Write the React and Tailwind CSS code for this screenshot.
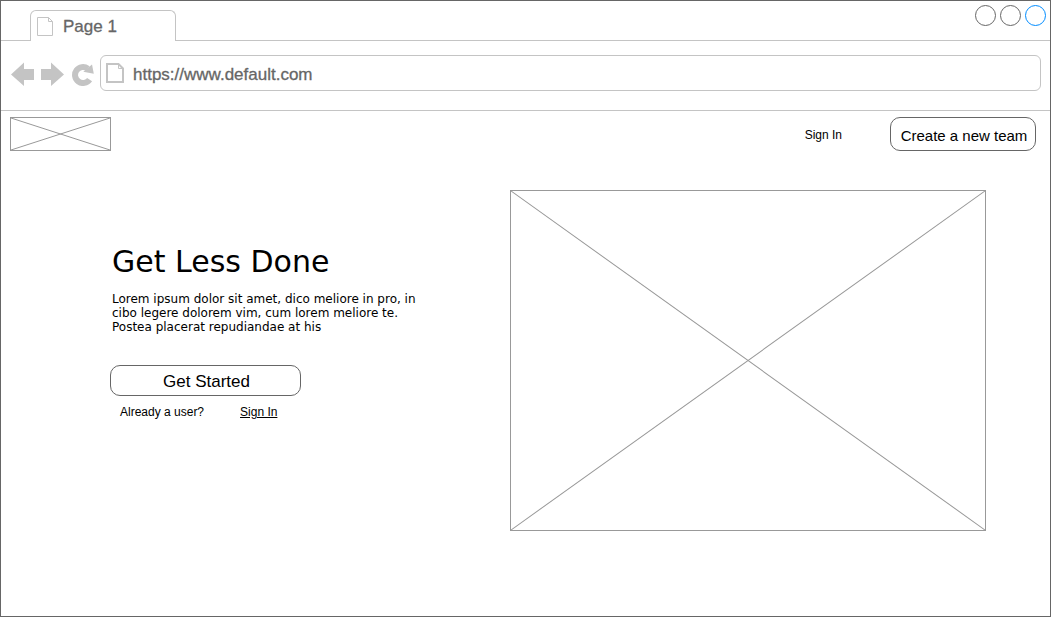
function PageIcon({ className, strokeWidth }) {
  return (
    <svg viewBox="0 0 18 20" className={className} fill="none" stroke="#c4c4c4" strokeWidth={strokeWidth} aria-hidden="true">
      <path d="M1 1H12.5L17 5.5V19H1Z" />
      <path d="M12.5 1V5.5H17" strokeWidth="1" />
    </svg>
  );
}

function ImagePlaceholder({ className, label }) {
  return (
    <div className={`border border-[#999999] ${className}`} role="img" aria-label={label}>
      <svg className="block h-full w-full" viewBox="0 0 100 100" preserveAspectRatio="none" stroke="#999999" aria-hidden="true">
        <path d="M0 0L100 100M0 100L100 0" vectorEffect="non-scaling-stroke" />
      </svg>
    </div>
  );
}

function TabBar() {
  return (
    <div className="flex h-10">
      <div className="w-[29px] border-b border-[#c4c4c4]" />
      <div className="mt-[9px] flex w-[146px] items-center rounded-t-md border border-b-0 border-[#c4c4c4] pl-1.5 pt-0.5 text-[17px] leading-5 text-[#666666]">
        <svg viewBox="0 0 17 20" className="h-5 w-[17px]" fill="none" stroke="#c4c4c4" aria-hidden="true">
          <path d="M0.5 0.5H11.5L15.5 4.5V18.5H0.5ZM11.5 0.5V4.5H15.5" />
        </svg>
        <span className="pl-[9px] [-webkit-text-stroke:0.3px_#666666]">Page 1</span>
      </div>
      <div className="flex flex-1 justify-end gap-1 border-b border-[#c4c4c4] pr-1 pt-1">
        <button aria-label="Minimize" className="size-[21px] rounded-full border border-[#666666]" />
        <button aria-label="Maximize" className="size-[21px] rounded-full border border-[#666666]" />
        <button aria-label="Close" className="size-[21px] rounded-full border border-[#008cff]" />
      </div>
    </div>
  );
}

function Toolbar() {
  return (
    <div className="flex h-[70px] items-start border-b border-[#c4c4c4] pl-2.5 pr-[9px] pt-3.5">
      <div className="flex h-9 w-[89px] items-center pt-0.5">
        <button aria-label="Back">
          <svg className="block h-6 w-[23px]" viewBox="0 0 23 24" fill="#c4c4c4">
            <path d="M0 12.5L13 0.5V7H23V18H13V24Z" />
          </svg>
        </button>
        <button aria-label="Forward" className="pl-[7px]">
          <svg className="block h-6 w-[23px]" viewBox="0 0 23 24" fill="#c4c4c4">
            <path d="M23 12.5L10 0.5V7H0V18H10V24Z" />
          </svg>
        </button>
        <button aria-label="Reload" className="pl-2">
          <svg className="block h-6 w-[22px]" viewBox="0 0 22 24">
            <path d="M15.8 6.6A8 8 0 1 0 17.6 17.6" fill="none" stroke="#c4c4c4" strokeWidth="6" />
            <path d="M20 2.5L21.8 11.8L11.3 9.8Z" fill="#c4c4c4" />
          </svg>
        </button>
      </div>
      <label className="flex h-9 min-w-0 flex-1 items-center rounded-md border border-[#c4c4c4] pl-[5px]">
        <PageIcon className="h-5 w-[18px]" strokeWidth="2" />
        <input
          type="text"
          aria-label="Address"
          defaultValue="https://www.default.com"
          className="ml-[9px] min-w-0 flex-1 bg-transparent pt-1 text-[17px] leading-6 text-[#666666] outline-none [-webkit-text-stroke:0.3px_#666666]"
        />
      </label>
    </div>
  );
}

export default function App() {
  return (
    <div className="flex min-h-screen flex-col border border-[#666666] bg-white font-['Liberation_Sans',Arial,sans-serif] text-black">
      <TabBar />
      <Toolbar />
      <header className="flex items-center pl-[9px] pr-3.5 pt-1.5">
        <ImagePlaceholder className="h-[34px] w-[101px]" label="Logo" />
        <nav className="ml-auto flex items-center gap-12">
          <a href="#sign-in" className="pt-0.5 text-xs">Sign In</a>
          <button className="h-[34px] w-[146px] whitespace-nowrap rounded-[10px] border border-[#666666] pl-0.5 pt-1 text-[15px] leading-5">
            Create a new team
          </button>
        </nav>
      </header>
      <main className="grid grid-cols-[400px_1fr] pl-[109px] pr-16 pt-[39px]">
        <section className="pt-[52px]">
          <h1 className="pl-0.5 font-['DejaVu_Sans',Verdana,sans-serif] text-[30px] leading-10">Get Less Done</h1>
          <p className="w-[330px] pl-0.5 pt-2.5 font-['DejaVu_Sans',Verdana,sans-serif] text-xs leading-[14px]">
            Lorem ipsum dolor sit amet, dico meliore in pro, in cibo legere dolorem vim, cum lorem meliore te. Postea placerat repudiandae at his
          </p>
          <button className="mt-[31px] block h-[31px] w-[191px] rounded-[10px] border border-[#666666] pl-0.5 pt-0.5 text-[17px] leading-5">
            Get Started
          </button>
          <div className="flex gap-9 pl-2.5 pt-2 text-xs">
            <span>Already a user?</span>
            <a href="#sign-in" className="underline">Sign In</a>
          </div>
        </section>
        <ImagePlaceholder className="aspect-[476/341]" label="Hero image" />
      </main>
    </div>
  );
}
